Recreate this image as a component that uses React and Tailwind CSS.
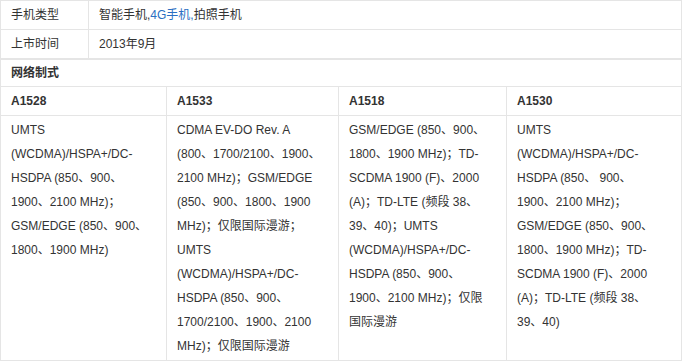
const networks = [
  {
    model: "A1528",
    text: "UMTS (WCDMA)/HSPA+/DC-HSDPA (850、900、1900、2100 MHz)；GSM/EDGE (850、900、1800、1900 MHz)",
  },
  {
    model: "A1533",
    text: "CDMA EV-DO Rev. A (800、1700/2100、1900、2100 MHz)；GSM/EDGE (850、900、1800、1900 MHz)；仅限国际漫游；UMTS (WCDMA)/HSPA+/DC-HSDPA (850、900、1700/2100、1900、2100 MHz)；仅限国际漫游",
  },
  {
    model: "A1518",
    text: "GSM/EDGE (850、900、1800、1900 MHz)；TD-SCDMA 1900 (F)、2000 (A)；TD-LTE (频段 38、39、40)；UMTS (WCDMA)/HSPA+/DC-HSDPA (850、900、1900、2100 MHz)；仅限国际漫游",
  },
  {
    model: "A1530",
    text: "UMTS (WCDMA)/HSPA+/DC-HSDPA (850、 900、1900、2100 MHz)；GSM/EDGE (850、900、1800、1900 MHz)；TD-SCDMA 1900 (F)、2000 (A)；TD-LTE (频段 38、39、40)",
  },
];

const widths = ["w-[166px]", "w-[172px]", "w-[168px]", "w-[174px]"];
const pads = ["pr-[10px]", "pr-[10px]", "pr-[15px]", "pr-[18px]"];

export default function App() {
  return (
    <div
      className="w-[682px] h-[361px] bg-white text-[12px] text-[#333]"
      style={{ fontFamily: '"Liberation Sans", Arial, "Noto Sans CJK SC", sans-serif' }}
    >
      <div className="border border-[#e5e5e5]">
        <div className="flex h-[29px] border-b border-[#e5e5e5]">
          <div className="w-[88px] shrink-0 border-r border-[#e5e5e5] px-[10px] flex items-center">手机类型</div>
          <div className="px-[10px] flex items-center">
            智能手机,<a className="text-[#2b6fc2]">4G手机,</a>拍照手机
          </div>
        </div>
        <div className="flex h-[30px] border-b-2 border-[#e5e5e5]">
          <div className="w-[88px] shrink-0 border-r border-[#e5e5e5] px-[10px] flex items-center">上市时间</div>
          <div className="px-[10px] flex items-center">2013年9月</div>
        </div>
        <div className="h-[27px] border-b border-[#e5e5e5] px-[10px] flex items-center font-bold">网络制式</div>
        <div className="flex h-[29px] border-b border-[#e5e5e5]">
          {networks.map((n, i) => (
            <div
              key={n.model}
              className={`${widths[i]} shrink-0 px-[10px] flex items-center font-bold ${i < 3 ? "border-r border-[#e5e5e5]" : ""}`}
            >
              {n.model}
            </div>
          ))}
        </div>
        <div className="flex h-[244px]">
          {networks.map((n, i) => (
            <div
              key={n.model}
              className={`${widths[i]} shrink-0 pl-[10px] ${pads[i]} pt-[2px] leading-[24px] ${i < 3 ? "border-r border-[#e5e5e5]" : ""}`}
            >
              {n.text}
            </div>
          ))}
        </div>
      </div>
    </div>
  );
}
